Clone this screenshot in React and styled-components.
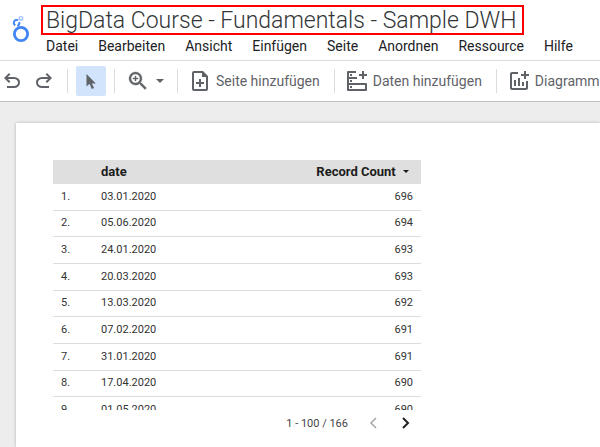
import React from 'react';
import styled, { createGlobalStyle, css } from 'styled-components';

const GlobalStyle = createGlobalStyle`
  * { box-sizing: border-box; }
  html, body { margin: 0; padding: 0; }
  body {
    background: #ededed;
    font-family: Roboto, "Liberation Sans", sans-serif;
    overflow: hidden;
  }
  button { font: inherit; color: inherit; border: 0; padding: 0; background: none; cursor: pointer; }
`;

const Shell = styled.div`
  display: flex;
  flex-direction: column;
  height: 100vh;
`;

const Header = styled.header`
  display: flex;
  height: 61px;
  padding-top: 5px;
  background: #fff;
  border-bottom: 1px solid #dadce0;
`;

const LogoLink = styled.a`
  flex: none;
  width: 41px;
  padding: 10px 0 0 12px;
  svg { display: block; }
`;

const TitleBlock = styled.div`
  min-width: 0;
`;

const Title = styled.h1`
  width: fit-content;
  height: 30px;
  margin: 0;
  padding: 0 6px 0 3px;
  border: 2px solid #fe0000;
  color: #333638;
  font: 300 23px/28px Roboto, sans-serif;
  white-space: nowrap;
`;

const Menu = styled.nav`
  display: flex;
  gap: 20px;
  padding-left: 5px;
`;

const MenuItem = styled.button`
  color: #202124;
  font-size: 14px;
  line-height: 22px;
  white-space: nowrap;
`;

const Toolbar = styled.div`
  display: flex;
  align-items: center;
  height: 41px;
  flex: none;
  background: #fff;
  border-bottom: 1px solid #bdbfc3;
  color: #5f6368;
  overflow: hidden;
`;

const ToolGroup = styled.div`
  display: flex;
  flex: none;
  gap: 8px;
  padding-right: 11px;
`;

const IconButton = styled.button`
  display: flex;
  align-items: center;
  justify-content: center;
  flex: none;
  height: 30px;
  ${(p) => p.$active && css`
    width: 30px;
    background: #d2e3fc;
    border-radius: 2px;
    margin: 0 8px;
  `}
`;

const ZoomButton = styled(IconButton)`
  width: 62px;
  padding-left: 11px;
  justify-content: flex-start;
  gap: 6px;
`;

const LabelButton = styled.button`
  display: flex;
  align-items: center;
  flex: none;
  gap: 4px;
  padding: 0 14px 0 10px;
  height: 30px;
  font-size: 14px;
  white-space: nowrap;
`;

const Separator = styled.span`
  flex: none;
  width: 1px;
  height: 24px;
  background: #dadce0;
`;

const Canvas = styled.main`
  flex: 1;
  min-height: 0;
  display: flex;
  padding: 21px 0 0 16px;
  background: #ededed;
`;

const Page = styled.section`
  flex: 1;
  padding: 37px;
  background: #fff;
  box-shadow: 0 0 3px rgba(0, 0, 0, 0.25);
`;

const Widget = styled.div`
  width: 368px;
`;

const TableClip = styled.div`
  height: 250px;
  overflow: hidden;
`;

const Table = styled.table`
  width: 100%;
  height: 264px;
  table-layout: fixed;
  border-collapse: separate;
  border-spacing: 0;
  font-size: 11px;
  color: #333;
`;

const Th = styled.th`
  height: 24px;
  padding: 0 ${(p) => (p.$end ? '12px' : '8px')} 0 8px;
  background: #dfdfdf;
  color: #1c1c1c;
  font-size: 13px;
  font-weight: 700;
  line-height: 16px;
  text-align: ${(p) => (p.$end ? 'right' : 'left')};
  width: ${(p) => (p.$index ? '40px' : 'auto')};
  svg { margin-left: 4px; vertical-align: 3px; }
`;

const Td = styled.td`
  padding: 0 8px;
  border-bottom: 1px solid #dcdcdc;
  line-height: 14px;
  text-align: ${(p) => (p.$end ? 'right' : 'left')};
`;

const Pager = styled.div`
  display: flex;
  align-items: center;
  justify-content: flex-end;
  height: 26px;
  padding-right: 4px;
  color: #444;
  font-size: 11px;
`;

const PagerButton = styled.button`
  display: flex;
  align-items: center;
  justify-content: center;
  width: 24px;
  height: 24px;
  margin-left: ${(p) => (p.$prev ? '13px' : '8px')};
`;

const symbol = { width: 24, height: 24, fill: 'currentColor', 'aria-hidden': true };

const Logo = () => (
  <svg width="18" height="28" viewBox="0 0 18 28" fill="none" aria-hidden="true">
    <circle cx="9" cy="19" r="6.6" stroke="#4285f4" strokeWidth="2.8" />
    <path d="M6 5.300A2.800 2.800 0 1 0 3.300 10.300" stroke="#4285f4" strokeWidth="2" />
    <path d="M7.300 7Q7.800 9.800 5.400 11.200" stroke="#4285f4" strokeWidth="2" />
    <circle cx="8.900" cy="3.400" r="1.800" stroke="#a0c3ff" strokeWidth="1.400" />
  </svg>
);

const undoPath =
  'M280-200v-80h284q63 0 109.5-40T720-420q0-60-46.5-100T564-560H312l104 104-56 56-200-200 200-200 56 56-104 104h252q97 0 169.5 63T800-420q0 94-72.5 157T564-200H280Z';

const UndoIcon = () => (
  <svg {...symbol} viewBox="0 -960 960 960"><path d={undoPath} /></svg>
);

const RedoIcon = () => (
  <svg {...symbol} viewBox="0 -960 960 960">
    <path d={undoPath} transform="translate(960 0) scale(-1 1)" />
  </svg>
);

const CursorIcon = () => (
  <svg {...symbol} viewBox="0 0 24 24">
    <path d="M7.500 5v12.500l3-2.700 2.300 5.100 2.300-1-2.300-4.500h4z" />
  </svg>
);

const ZoomIcon = () => (
  <svg {...symbol} viewBox="0 0 24 24">
    <path d="M15.5 14h-.79l-.28-.27A6.47 6.47 0 0 0 16 9.5 6.5 6.5 0 1 0 9.5 16c1.61 0 3.09-.59 4.23-1.57l.27.28v.79l5 4.99L20.49 19l-4.99-5zm-6 0C7.01 14 5 11.99 5 9.5S7.01 5 9.5 5 14 7.01 14 9.5 11.99 14 9.5 14zm2.5-4h-2v2H9v-2H7V9h2V7h1v2h2v1z" stroke="currentColor" strokeWidth="0.4" />
  </svg>
);

const CaretIcon = ({ width = 8, height = 4 }) => (
  <svg width={width} height={height} viewBox="0 0 8 4" fill="currentColor" aria-hidden="true">
    <path d="M0 0h8L4 4z" />
  </svg>
);

const PageAddIcon = () => (
  <svg {...symbol} viewBox="0 0 24 24">
    <path fillRule="evenodd" d="M6 2h9l5 5v13a2 2 0 0 1-2 2H6a2 2 0 0 1-2-2V4a2 2 0 0 1 2-2zm0 2v16h12V8h-4V4zM11 10h2v3h3v2h-3v3h-2v-3H8v-2h3z" />
  </svg>
);

const DataAddIcon = () => (
  <svg {...symbol} viewBox="0 0 24 24" fill="none" stroke="currentColor" strokeWidth="2">
    <path d="M11 3H3V21H21V15H3M3 9H12" strokeLinejoin="round" />
    <path d="M18 2v8M14 6h8" />
    <path d="M5 6h2M5 12h2M5 18h2" />
  </svg>
);

const ChartAddIcon = () => (
  <svg {...symbol} viewBox="0 0 24 24">
    <path d="M22 5v2h-3v3h-2V7h-3V5h3V2h2v3h3zm-3 14H5V5h6V3H5c-1.100 0-2 .9-2 2v14c0 1.100.9 2 2 2h14c1.100 0 2-.9 2-2v-7h-2v7zM15 13v4h2v-4h-2zM11 17h2V9h-2v8zm-2 0v-6H7v6h2z" />
  </svg>
);

const Chevron = ({ next }) => (
  <svg width="24" height="24" viewBox="0 0 24 24" fill="none" aria-hidden="true"
    stroke={next ? '#222' : '#a6a6a6'} strokeWidth={next ? 2 : 1.5}>
    <path d={next ? 'M10 7l5 5-5 5' : 'M15 7l-5 5 5 5'} />
  </svg>
);

const menuItems = ['Datei', 'Bearbeiten', 'Ansicht', 'Einfügen', 'Seite', 'Anordnen', 'Ressource', 'Hilfe'];

const rows = [
  ['03.01.2020', 696],
  ['05.06.2020', 694],
  ['24.01.2020', 693],
  ['20.03.2020', 693],
  ['13.03.2020', 692],
  ['07.02.2020', 691],
  ['31.01.2020', 691],
  ['17.04.2020', 690],
  ['01.05.2020', 690],
];

export default function App() {
  return (
    <Shell>
      <GlobalStyle />
      <Header>
        <LogoLink href="#" aria-label="Looker Studio"><Logo /></LogoLink>
        <TitleBlock>
          <Title>BigData Course - Fundamentals - Sample DWH</Title>
          <Menu>
            {menuItems.map((item) => <MenuItem key={item}>{item}</MenuItem>)}
          </Menu>
        </TitleBlock>
      </Header>
      <Toolbar>
        <ToolGroup>
          <IconButton aria-label="Rückgängig"><UndoIcon /></IconButton>
          <IconButton aria-label="Wiederholen"><RedoIcon /></IconButton>
        </ToolGroup>
        <Separator />
        <IconButton $active aria-label="Auswahl"><CursorIcon /></IconButton>
        <Separator />
        <ZoomButton aria-label="Zoom"><ZoomIcon /><CaretIcon /></ZoomButton>
        <Separator />
        <LabelButton><PageAddIcon />Seite hinzufügen</LabelButton>
        <Separator />
        <LabelButton><DataAddIcon />Daten hinzufügen</LabelButton>
        <Separator />
        <LabelButton><ChartAddIcon />Diagramm</LabelButton>
      </Toolbar>
      <Canvas>
        <Page>
          <Widget>
            <TableClip>
              <Table>
                <thead>
                  <tr>
                    <Th $index aria-label="Nr." />
                    <Th>date</Th>
                    <Th $end>Record Count <CaretIcon width={6} height={3} /></Th>
                  </tr>
                </thead>
                <tbody>
                  {rows.map(([date, count], i) => (
                    <tr key={date}>
                      <Td>{i + 1}.</Td>
                      <Td>{date}</Td>
                      <Td $end>{count}</Td>
                    </tr>
                  ))}
                </tbody>
              </Table>
            </TableClip>
            <Pager>
              <span>1 - 100 / 166</span>
              <PagerButton $prev aria-label="Zurück" disabled><Chevron /></PagerButton>
              <PagerButton aria-label="Weiter"><Chevron next /></PagerButton>
            </Pager>
          </Widget>
        </Page>
      </Canvas>
    </Shell>
  );
}
